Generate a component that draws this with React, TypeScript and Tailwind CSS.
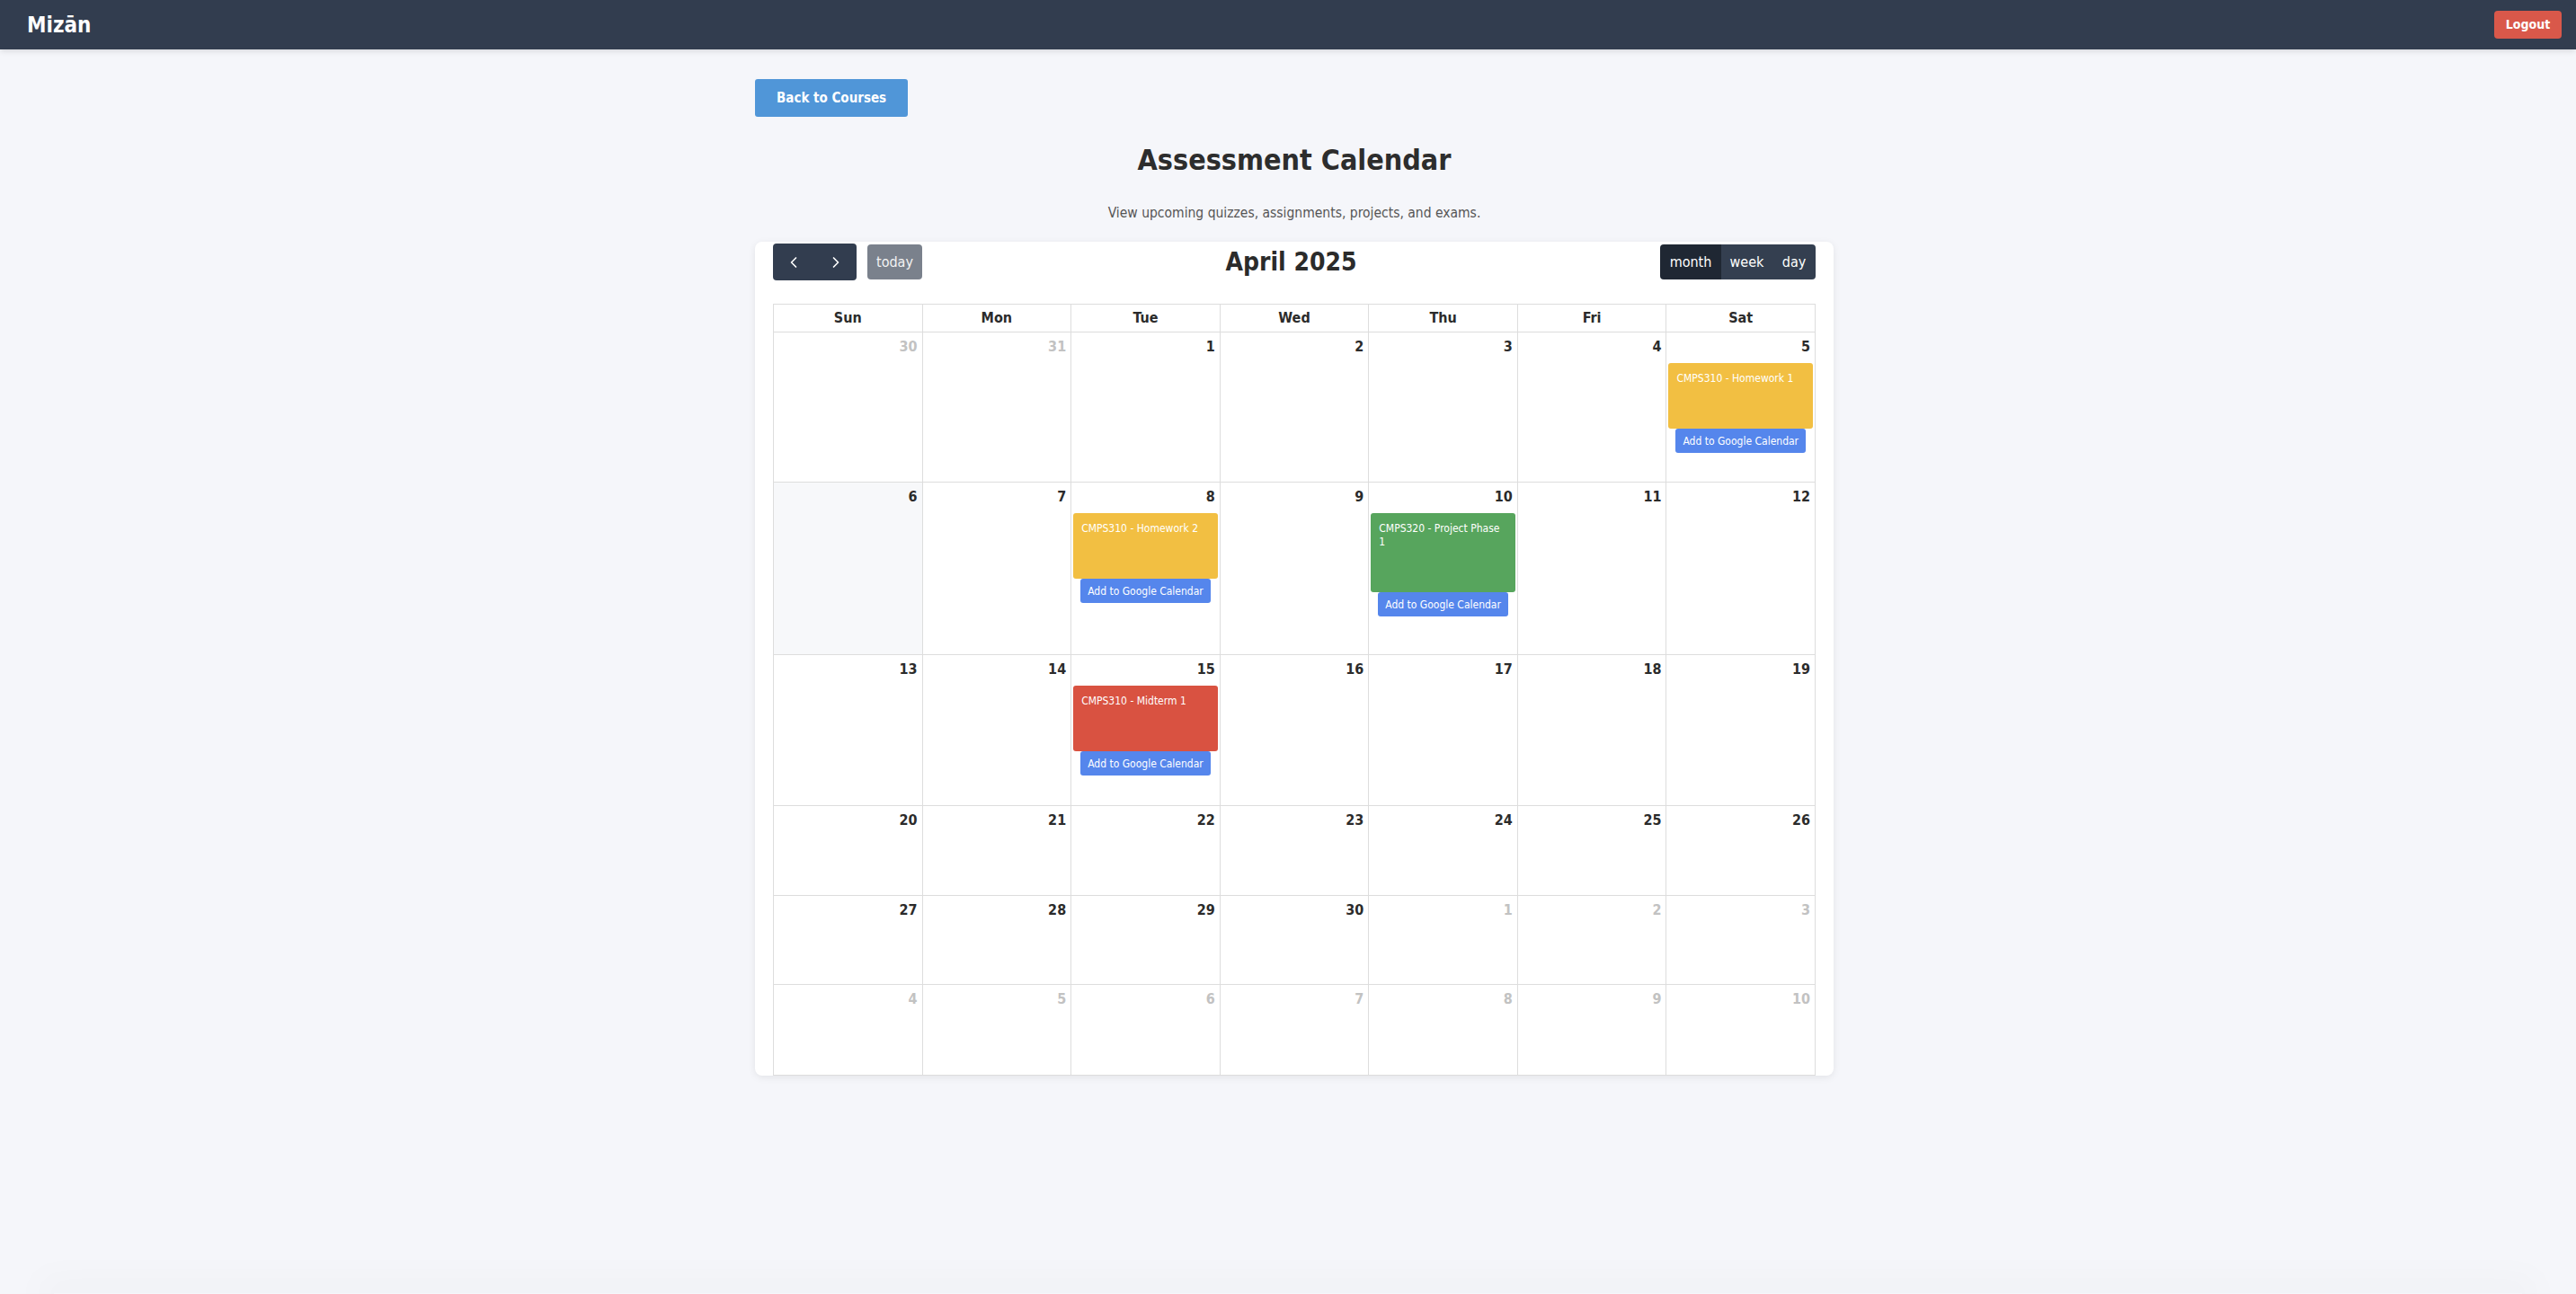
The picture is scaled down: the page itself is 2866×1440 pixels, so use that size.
import React from "react";
import { ChevronLeft, ChevronRight } from "lucide-react";

type CalEvent = { title: string; color: string };

type Day = { n: number; muted?: boolean; shade?: boolean; event?: CalEvent };

const FONT = { fontFamily: '"DejaVu Sans Condensed", "DejaVu Sans", Tahoma, sans-serif' };

const weeks: Day[][] = [
  [
    { n: 30, muted: true },
    { n: 31, muted: true },
    { n: 1 },
    { n: 2 },
    { n: 3 },
    { n: 4 },
    { n: 5, event: { title: "CMPS310 - Homework 1", color: "bg-[#f2bf42]" } },
  ],
  [
    { n: 6, shade: true },
    { n: 7 },
    { n: 8, event: { title: "CMPS310 - Homework 2", color: "bg-[#f2bf42]" } },
    { n: 9 },
    { n: 10, event: { title: "CMPS320 - Project Phase 1", color: "bg-[#57a55d]" } },
    { n: 11 },
    { n: 12 },
  ],
  [
    { n: 13 },
    { n: 14 },
    { n: 15, event: { title: "CMPS310 - Midterm 1", color: "bg-[#d95241]" } },
    { n: 16 },
    { n: 17 },
    { n: 18 },
    { n: 19 },
  ],
  [20, 21, 22, 23, 24, 25, 26].map((n) => ({ n })),
  [
    { n: 27 },
    { n: 28 },
    { n: 29 },
    { n: 30 },
    { n: 1, muted: true },
    { n: 2, muted: true },
    { n: 3, muted: true },
  ],
  [4, 5, 6, 7, 8, 9, 10].map((n) => ({ n, muted: true })),
];

const rowHeights = ["h-[167px]", "h-[192px]", "h-[168px]", "h-[100px]", "h-[99px]", "h-[101px]"];

function DayCell({ day, height }: { day: Day; height: string }) {
  return (
    <div className={`${height} border-r border-b border-[#dddddd] ${day.shade ? "bg-[#f7f8fa]" : "bg-white"}`}>
      <div
        className={`h-[34px] px-[5px] pt-[6px] text-right text-[16px] font-bold leading-[20px] ${
          day.muted ? "text-[#c2c2c2]" : "text-[#2b2b2b]"
        }`}
      >
        {day.n}
      </div>
      {day.event && (
        <div className="mx-[2px]">
          <div
            className={`${day.event.color} rounded-[3px] px-[9px] pt-[10px] pb-[48px] text-[12px] leading-[15px] text-white`}
          >
            {day.event.title}
          </div>
          <button className="ml-[8px] h-[27px] rounded-[3px] bg-[#5586ec] px-[8px] text-[12px] text-white">
            Add to Google Calendar
          </button>
        </div>
      )}
    </div>
  );
}

export default function App() {
  return (
    <div className="flex min-h-screen flex-col bg-[#f5f6fa]" style={FONT}>
      {/* Top bar */}
      <header className="flex h-[55px] items-center justify-between bg-[#323d4f] pl-[30px] pr-[16px] shadow-[0_2px_6px_rgba(0,0,0,0.12)]">
        <span className="text-[24px] font-bold text-white">Mizān</span>
        <button className="h-[31px] w-[75px] rounded-[4px] bg-[#d9584a] text-[14px] font-bold text-white">
          Logout
        </button>
      </header>

      <main className="mx-auto w-[1214px] pl-[14px]">
        <button className="mt-[33px] h-[42px] rounded-[3px] bg-[#5096d8] px-[24px] text-[15px] font-bold text-white">
          Back to Courses
        </button>

        <h1 className="mt-[28px] text-center text-[32px] font-bold leading-[40px] text-[#2d2d2d]">
          Assessment Calendar
        </h1>
        <p className="mt-[29px] text-center text-[15.5px] leading-[20px] text-[#555555]">
          View upcoming quizzes, assignments, projects, and exams.
        </p>

        {/* Calendar card */}
        <section className="mt-[22px] rounded-[8px] bg-white px-[20px] pt-[2px] shadow-[0_2px_8px_rgba(0,0,0,0.08)]">
          <div className="flex h-[41px] items-center justify-between">
            <div className="flex items-center">
              <div className="flex h-[41px] w-[93px] overflow-hidden rounded-[4px] bg-[#323d4f] text-white">
                <button className="flex flex-1 items-center justify-center">
                  <ChevronLeft size={20} strokeWidth={2} />
                </button>
                <button className="flex flex-1 items-center justify-center">
                  <ChevronRight size={20} strokeWidth={2} />
                </button>
              </div>
              <button className="ml-[12px] h-[39px] w-[61px] rounded-[4px] bg-[#7a818c] text-[16px] text-[#f3f3f3]">
                today
              </button>
            </div>
            <h2 className="text-[28px] font-bold text-[#2b2b2b]">April 2025</h2>
            <div className="flex h-[39px] overflow-hidden rounded-[4px] text-[16px] text-white">
              <button className="w-[68px] bg-[#1f2733]">month</button>
              <button className="w-[57px] bg-[#343f50]">week</button>
              <button className="w-[48px] bg-[#343f50]">day</button>
            </div>
          </div>

          <div className="mt-[26px] grid grid-cols-7 border-t border-l border-[#dddddd]">
            {["Sun", "Mon", "Tue", "Wed", "Thu", "Fri", "Sat"].map((d) => (
              <div
                key={d}
                className="flex h-[31px] items-center justify-center border-r border-b border-[#dddddd] text-[16px] font-bold text-[#2b2b2b]"
              >
                {d}
              </div>
            ))}
            {weeks.map((week, wi) =>
              week.map((day, di) => <DayCell key={`${wi}-${di}`} day={day} height={rowHeights[wi]} />)
            )}
          </div>
        </section>
      </main>

      {/* faint shadow along the bottom edge */}
      <div className="mx-[60px] mt-auto h-[1px] rounded-full shadow-[0_0_40px_18px_rgba(0,0,0,0.025)]" />
    </div>
  );
}
